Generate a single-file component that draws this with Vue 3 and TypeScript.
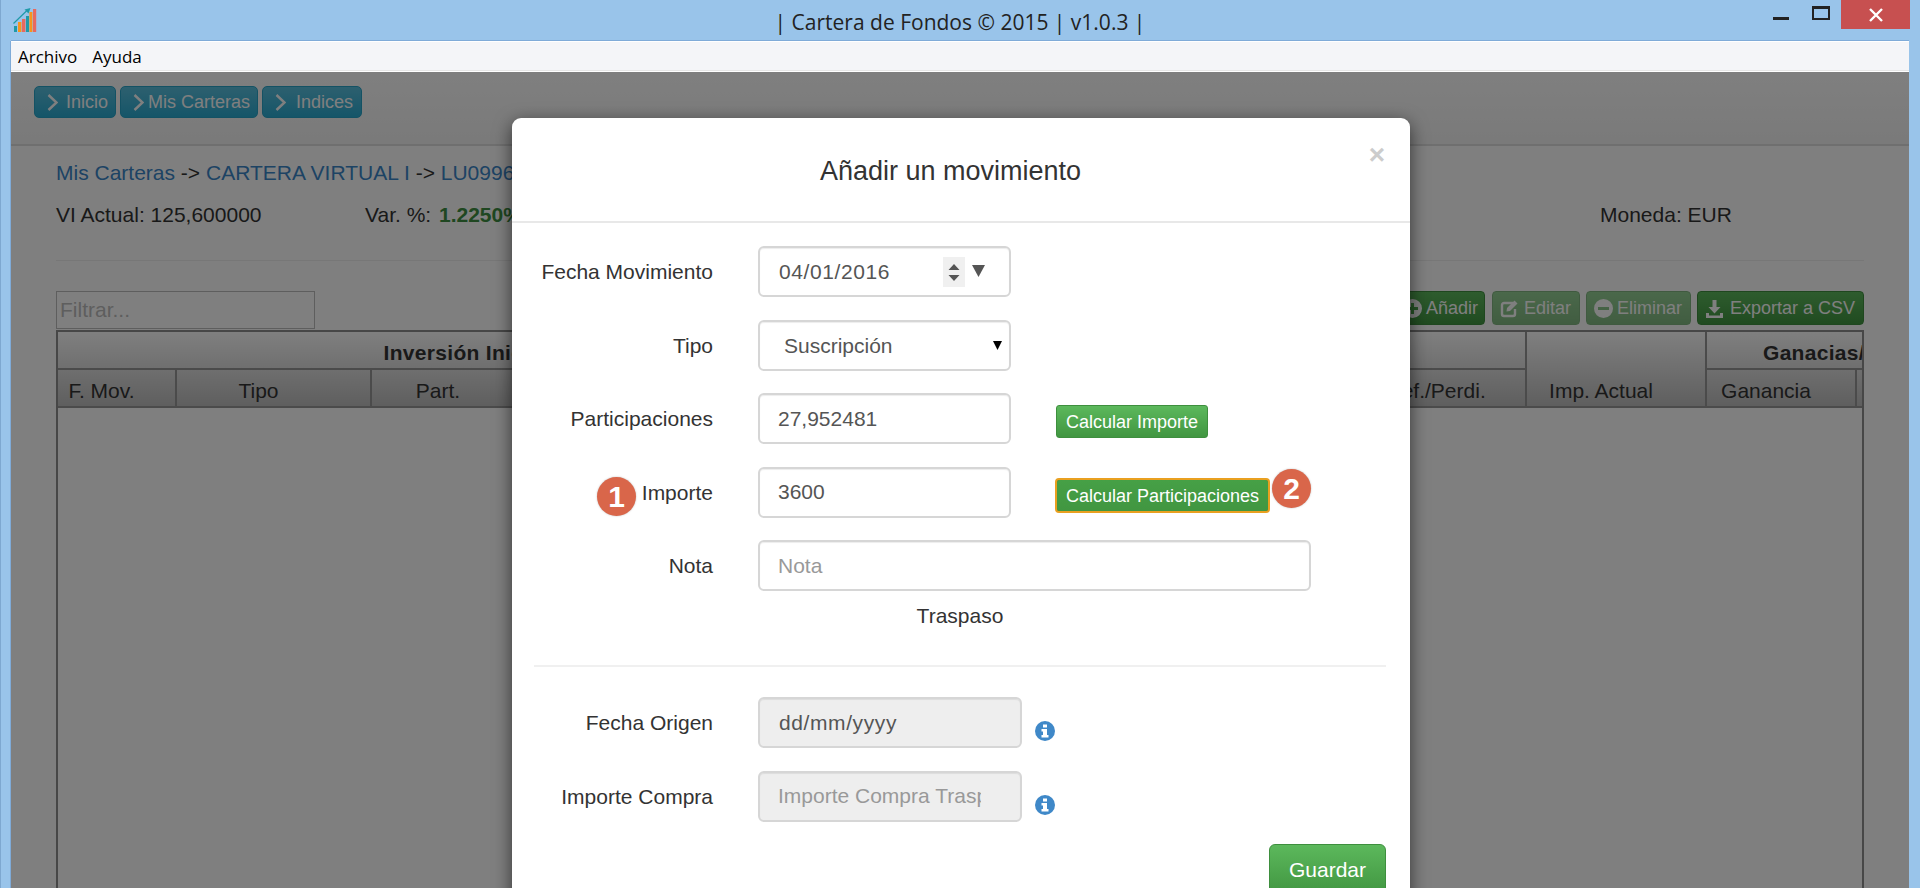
<script setup lang="ts">
const navItems: { label: string; spacing?: string }[] = [
  { label: 'Inicio' },
  { label: 'Mis Carteras', spacing: 'tight' },
  { label: 'Indices', spacing: 'roomy' }
]
</script>

<template>
  <div class="window">
    <header class="titlebar">
      <svg class="logo" width="24" height="25" viewBox="0 0 24 25">
        <rect x="1" y="18" width="3" height="6" fill="#1f9aa8" />
        <rect x="5" y="14" width="3.4" height="10" fill="#f7941d" />
        <rect x="9" y="11" width="3.4" height="13" fill="#e8695f" />
        <rect x="13" y="8" width="3" height="16" fill="#1f9aa8" />
        <rect x="16.4" y="4" width="3" height="20" fill="#f7941d" />
        <rect x="20" y="1" width="3.2" height="23" fill="#e8695f" />
        <path d="M0.5 15.5 L15 1.5" stroke="#1f9aa8" stroke-width="1.2" fill="none" />
        <path d="M17.5 0 L11.5 1.5 L15.5 5.5 Z" fill="#1f9aa8" />
      </svg>
      <div class="title">| Cartera de Fondos © 2015 | v1.0.3 |</div>
      <div class="controls">
        <span class="min"></span>
        <span class="max"></span>
        <span class="close">
          <svg width="18" height="14" viewBox="0 0 18 14">
            <path d="M3 1 L15 13 M15 1 L3 13" stroke="#fff" stroke-width="2.4" fill="none" />
          </svg>
        </span>
      </div>
    </header>

    <div class="client">
      <nav class="menu"><span>Archivo</span><span>Ayuda</span></nav>

      <div class="viewport">
        <div class="page">
          <div class="navbar">
            <a v-for="item in navItems" :key="item.label" class="nav-btn" :class="item.spacing">
              <svg width="11" height="17" viewBox="0 0 11 17">
                <path d="M1.5 1 L9.5 8.5 L1.5 16" stroke="#fff" stroke-width="2.4" fill="none" />
              </svg>
              <span>{{ item.label }}</span>
            </a>
          </div>

          <div class="content">
            <div class="crumbs">
              <a>Mis Carteras</a> -&gt; <a>CARTERA VIRTUAL I</a> -&gt; <a>LU0996</a>
            </div>
            <div class="stats">
              <span>VI Actual: 125,600000</span>
              <span>Var. %: <b>1.2250%</b></span>
              <span>Moneda: EUR</span>
            </div>
            <div class="page-rule"></div>

            <div class="toolbar">
              <input class="filter" placeholder="Filtrar..." />
              <div class="actions">
                <button class="act w-add">
                  <svg width="19" height="19" viewBox="0 0 19 19">
                    <path fill="#fff" fill-rule="evenodd" d="M9.5 0a9.5 9.5 0 1 1 0 19a9.5 9.5 0 1 1 0-19ZM8 4v4H4v3h4v4h3v-4h4V8h-4V4Z" />
                  </svg>
                  Añadir
                </button>
                <button class="act w-edit off">
                  <svg width="19" height="19" viewBox="0 0 19 19">
                    <path fill="none" stroke="#fff" stroke-width="2.4" d="M13 4H4a2 2 0 0 0-2 2v9a2 2 0 0 0 2 2h9a2 2 0 0 0 2-2v-5" />
                    <path fill="#fff" d="M7 9 L14.5 1.5 L17.5 4.5 L10 12 L6.5 12.5 Z" />
                  </svg>
                  Editar
                </button>
                <button class="act w-del off">
                  <svg width="19" height="19" viewBox="0 0 19 19">
                    <path fill="#fff" fill-rule="evenodd" d="M9.5 0a9.5 9.5 0 1 1 0 19a9.5 9.5 0 1 1 0-19ZM4 8v3h11V8Z" />
                  </svg>
                  Eliminar
                </button>
                <button class="act w-csv">
                  <svg width="19" height="19" viewBox="0 0 19 19">
                    <path fill="#fff" d="M7.5 1h4v7h4l-6 6.5L3.500 8h4Z" />
                    <path fill="#fff" d="M1 14h3v2.500h11V14h3v5H1Z" />
                  </svg>
                  Exportar a CSV
                </button>
              </div>
            </div>

            <div class="table-wrap">
              <table>
                <colgroup>
                  <col class="c1" /><col class="c2" /><col class="c3" /><col class="c4" />
                  <col class="c5" /><col class="c6" /><col class="c7" /><col class="c8" /><col class="c9" />
                </colgroup>
                <thead>
                  <tr>
                    <th colspan="4" class="group">Inversión Inicial</th>
                    <th colspan="2" class="group"></th>
                    <th rowspan="2" class="sub">Imp. Actual</th>
                    <th colspan="2" class="group">Ganacias/Pérdidas</th>
                  </tr>
                  <tr>
                    <th class="sub">F. Mov.</th>
                    <th class="sub">Tipo</th>
                    <th class="sub">Part.</th>
                    <th class="sub"></th>
                    <th class="sub"></th>
                    <th class="sub">Benef./Perdi.</th>
                    <th class="sub">Ganancia</th>
                    <th class="sub"></th>
                  </tr>
                </thead>
              </table>
            </div>
          </div>
        </div>

        <div class="backdrop"></div>

        <section class="modal">
          <div class="modal-head">
            <h4>Añadir un movimiento</h4>
            <span class="dismiss">×</span>
          </div>
          <div class="modal-body">
            <div class="row">
              <label>Fecha Movimiento</label>
              <div class="field fake">
                04/01/2016
                <span class="spin">
                  <svg width="22" height="30" viewBox="0 0 22 30">
                    <path d="M11 7 L16.500 13 H5.500 Z M5.500 18 H16.500 L11 24 Z" fill="#555" />
                  </svg>
                </span>
                <svg class="drop" width="13" height="12" viewBox="0 0 13 12">
                  <path d="M0 0 H13 L6.500 12 Z" fill="#555" />
                </svg>
              </div>
            </div>
            <div class="row">
              <label>Tipo</label>
              <div class="select-box">
                <select class="field select"><option>Suscripción</option></select>
                <svg class="select-arrow" width="9" height="9" viewBox="0 0 9 9">
                  <path d="M0 0 H9 L4.500 9 Z" fill="#000" />
                </svg>
              </div>
            </div>
            <div class="row">
              <label>Participaciones</label>
              <input class="field" value="27,952481" />
              <button class="calc">Calcular Importe</button>
            </div>
            <div class="row">
              <label>Importe</label>
              <input class="field" value="3600" />
              <button class="calc focus">Calcular Participaciones</button>
            </div>
            <div class="row">
              <label>Nota</label>
              <input class="field wide" placeholder="Nota" />
            </div>
            <div class="traspaso">Traspaso</div>
            <div class="modal-rule"></div>
            <div class="row">
              <label>Fecha Origen</label>
              <div class="field fake locked">dd/mm/yyyy</div>
              <svg class="info" width="20" height="20" viewBox="0 0 20 20">
                <circle cx="10" cy="10" r="10" fill="#3f88c8" />
                <rect x="8" y="3.500" width="4" height="3" fill="#fff" />
                <path d="M6.500 8 H12 V14 H13.500 V16.500 H6.500 V14 H8 V10.500 H6.500 Z" fill="#fff" />
              </svg>
            </div>
            <div class="row">
              <label>Importe Compra</label>
              <input class="field locked clip" disabled placeholder="Importe Compra Traspaso" />
              <svg class="info" width="20" height="20" viewBox="0 0 20 20">
                <circle cx="10" cy="10" r="10" fill="#3f88c8" />
                <rect x="8" y="3.500" width="4" height="3" fill="#fff" />
                <path d="M6.500 8 H12 V14 H13.500 V16.500 H6.500 V14 H8 V10.500 H6.500 Z" fill="#fff" />
              </svg>
            </div>
            <div class="save-row"><button class="save">Guardar</button></div>
          </div>
          <span class="badge one">1</span>
          <span class="badge two">2</span>
        </section>
      </div>
    </div>
  </div>
</template>

<style>
html, body { margin: 0; height: 888px; overflow: hidden; }
</style>

<style scoped>
.window {
  height: 888px;
  display: flex;
  flex-direction: column;
  background: #99c4ea;
  box-shadow: inset 1px 0 0 #7ea8d0;
  font-family: "Liberation Sans", Arial, sans-serif;
  color: #333;
  overflow: hidden;
}
.titlebar {
  height: 41px;
  flex: none;
  position: relative;
  display: flex;
  justify-content: center;
}
.logo { position: absolute; left: 13px; top: 8px; }
.title {
  font-family: "Open Sans", sans-serif;
  font-size: 21px;
  line-height: 44px;
  color: #222;
}
.controls {
  position: absolute;
  right: 10px;
  top: 0;
  height: 29px;
  display: flex;
}
.min { width: 16px; height: 3px; background: #222; margin: 17px 23px 0 0; }
.max { width: 14px; height: 9px; border: 2px solid #222; border-top-width: 3px; margin: 6px 11px 0 0; box-sizing: content-box; }
.close {
  width: 69px;
  height: 29px;
  background: #c75050;
  display: flex;
  align-items: center;
  justify-content: center;
}
.client {
  flex: 1;
  min-height: 0;
  margin: 0 11px;
  display: flex;
  flex-direction: column;
  box-shadow: 0 -1px 0 #7fabd8, -1px 0 0 #7fabd8;
  background: #fff;
}
.menu {
  height: 29px;
  flex: none;
  background: #f4f5f8;
  border-bottom: 1px solid #e6e6e6;
  box-shadow: inset 0 1px 0 #fff;
  padding-left: 7px;
  display: flex;
  gap: 15px;
  font-family: "Open Sans", sans-serif;
  font-size: 17px;
  line-height: 31px;
  color: #000;
}
.viewport { flex: 1; min-height: 0; position: relative; overflow: hidden; border-top: 1px solid #fff; }
.page { height: 100%; display: flex; flex-direction: column; background: #fff; }
.navbar {
  height: 72px;
  flex: none;
  box-sizing: content-box;
  border-bottom: 2px solid #dedede;
  background: linear-gradient(#fff, #f4f4f4);
  padding-left: 23px;
  display: flex;
  gap: 4px;
}
.nav-btn {
  height: 32px;
  margin-top: 14px;
  box-sizing: border-box;
  padding: 0 7px 0 12px;
  display: flex;
  align-items: center;
  gap: 8px;
  border: 1px solid #28a4c9;
  border-radius: 5px;
  background: linear-gradient(#5bc0de, #2aabd2);
  color: #fff;
  font-size: 18px;
}
.nav-btn.tight { gap: 4px; }
.nav-btn.roomy { gap: 10px; padding-right: 8px; }
.content {
  flex: 1;
  min-height: 0;
  display: flex;
  flex-direction: column;
  padding: 12px 45px 0 45px;
  font-size: 21px;
  line-height: 30px;
}
.crumbs a { color: #3a86c8; }
.stats {
  margin-top: 12px;
  display: grid;
  grid-template-columns: 309px 1235px auto;
}
.stats b { color: #3f8f42; margin-left: 2px; }
.page-rule { height: 1px; background: #eee; margin: 30px 0 30px; flex: none; }
.toolbar {
  height: 39px;
  flex: none;
  display: flex;
  justify-content: space-between;
  align-items: flex-start;
}
.filter {
  width: 259px;
  height: 38px;
  box-sizing: border-box;
  border: 1px solid #bdbdbd;
  padding: 0 3px;
  font: 21px "Liberation Sans", Arial, sans-serif;
  background: #fff;
}
.filter::placeholder { color: #bdbdbd; opacity: 1; }
.actions { display: flex; gap: 6px; }
.act {
  height: 34px;
  box-sizing: border-box;
  padding: 0 0 0 7px;
  display: flex;
  align-items: center;
  gap: 4px;
  border: 1px solid #3e8f3e;
  border-radius: 4px;
  background: linear-gradient(#5cb85c, #419641);
  color: #fff;
  font: 18px "Liberation Sans", Arial, sans-serif;
}
.act.off { opacity: .65; }
.w-add { width: 90px; margin-right: 1px; }
.w-edit { width: 88px; gap: 5px; }
.w-del { width: 105px; }
.w-csv { width: 167px; gap: 6px; }
.table-wrap {
  flex: 1;
  min-height: 0;
  overflow: hidden;
  border: 2px solid #8f8f8f;
  border-bottom: 0;
}
table {
  table-layout: fixed;
  width: 1956px;
  border-collapse: separate;
  border-spacing: 0;
}
thead { background: linear-gradient(#fff, #bcbcbc); }
.c1 { width: 119px; }
.c2 { width: 195px; }
.c3 { width: 164px; }
.c4 { width: 339px; }
.c5 { width: 480px; }
.c6 { width: 172px; }
.c7 { width: 180px; }
.c8 { width: 150px; }
.c9 { width: 157px; }
th {
  height: 38px;
  padding: 0;
  box-sizing: border-box;
  border-right: 2px solid #979797;
  border-bottom: 2px solid #979797;
  vertical-align: bottom;
  white-space: nowrap;
  overflow: hidden;
  font-size: 21px;
  line-height: 30px;
}
.group { font-weight: 700; letter-spacing: .3px; }
.sub { font-weight: 400; padding-right: 30px; }
.backdrop { position: absolute; inset: 0; background: rgba(0, 0, 0, .5); }
.modal {
  position: absolute;
  left: 501px;
  top: 46px;
  width: 898px;
  height: 900px;
  background: #fff;
  border-radius: 9px;
  box-shadow: 0 5px 18px rgba(0, 0, 0, .6);
}
.modal-head {
  height: 105px;
  box-sizing: border-box;
  border-bottom: 2px solid #e8e8e8;
  position: relative;
  text-align: center;
  padding-right: 21px;
}
h4 {
  margin: 0;
  padding-top: 34px;
  font-size: 27px;
  font-weight: 400;
  line-height: 38px;
}
.dismiss {
  position: absolute;
  right: 25px;
  top: 18px;
  font-size: 28px;
  font-weight: 700;
  line-height: 38px;
  color: #ccc;
}
.modal-body { padding: 23px 24px 0 22px; font-size: 21px; }
.row { display: flex; margin-bottom: 22.5px; height: 51px; }
label {
  width: 179px;
  height: 51px;
  margin-right: 45px;
  flex: none;
  text-align: right;
  line-height: 52px;
}
.field {
  width: 253px;
  height: 51px;
  flex: none;
  box-sizing: border-box;
  border: 2px solid #d6d6d6;
  border-radius: 6px;
  padding: 0 18px;
  font: 21px "Liberation Sans", Arial, sans-serif;
  line-height: 47px;
  color: #555;
  background: #fff;
  box-shadow: inset 0 1px 1px rgba(0, 0, 0, .075);
}
.field::placeholder { color: #999; opacity: 1; }
.field.wide { width: 553px; }
.fake { position: relative; letter-spacing: .6px; padding-left: 19px; }
.spin {
  position: absolute;
  left: 183px;
  top: 9px;
  width: 22px;
  height: 30px;
  background: #f0f0f0;
  display: flex;
}
.drop { position: absolute; left: 212px; top: 17px; }
.select-box { position: relative; }
.select { appearance: none; padding-left: 24px; }
.select-arrow { position: absolute; left: 235px; top: 21px; }
.calc {
  height: 33px;
  margin: 12px 0 0 45px;
  padding: 2px 9px 0;
  box-sizing: border-box;
  border: 1px solid #3e8f3e;
  border-radius: 3px;
  background: linear-gradient(#5cb85c, #419641);
  color: #fff;
  font: 18px "Liberation Sans", Arial, sans-serif;
}
.calc.focus {
  background: linear-gradient(#46a046, #419641);
  border-color: #2b5f2b;
  outline: 2px solid #e9a020;
  outline-offset: -1px;
}
.traspaso { text-align: center; line-height: 30px; margin-top: -12.5px; color: #333; }
.modal-rule { height: 2px; background: #f0f0f0; margin: 34px 0 30px; }
.locked { background: #eee; width: 264px; }
.clip { padding-right: 39px; }
.info { margin: 24px 0 0 13px; flex: none; }
.save-row { display: flex; justify-content: flex-end; margin-top: -0.5px; }
.save {
  width: 117px;
  height: 51px;
  box-sizing: border-box;
  padding-top: 3px;
  border: 1px solid #3e8f3e;
  border-radius: 6px;
  background: linear-gradient(#5cb85c, #419641);
  color: #fff;
  font: 21px "Liberation Sans", Arial, sans-serif;
}
.badge {
  position: absolute;
  width: 39px;
  height: 39px;
  border-radius: 50%;
  background: #d9664a;
  color: #fff;
  font-size: 30px;
  font-weight: 700;
  line-height: 39px;
  text-align: center;
  box-shadow: 0 0 2px rgba(0, 0, 0, .25);
}
.one { left: 85px; top: 359px; }
.two { left: 760px; top: 351px; }
</style>
